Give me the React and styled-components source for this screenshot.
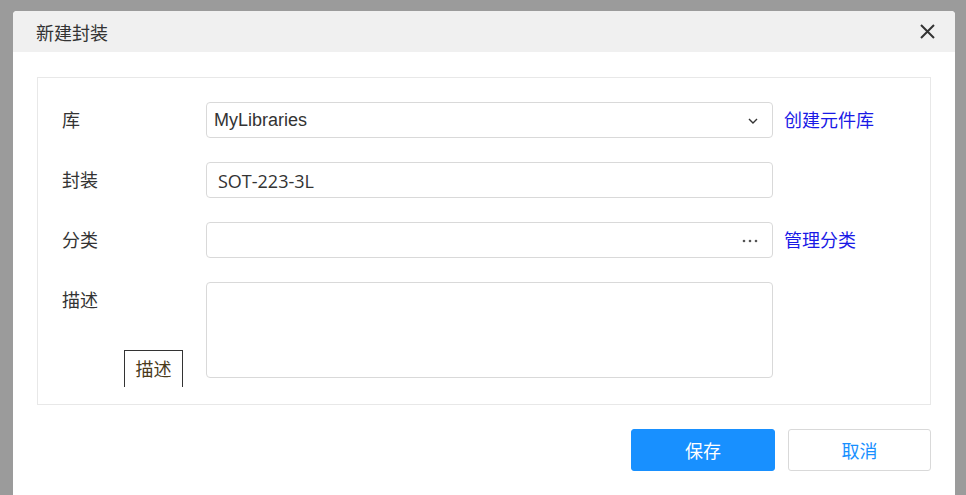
import React from 'react';
import styled, { createGlobalStyle } from 'styled-components';

const Global = createGlobalStyle`
  html, body { margin: 0; padding: 0; }
  body {
    background: #9b9b9b;
    font-family: "Liberation Sans", "Noto Sans CJK SC", sans-serif;
    overflow: hidden;
  }
`;

const Page = styled.div`
  padding: 11px 11px 0 13px;
  height: 495px;
  box-sizing: border-box;
`;

const Dialog = styled.div`
  width: 942px;
  height: 484px;
  background: #fff;
  border-radius: 4px 4px 0 0;
  overflow: hidden;
`;

const Header = styled.div`
  height: 41px;
  background: #f0f0f0;
  display: flex;
  align-items: center;
  justify-content: space-between;
  padding: 0 18px 0 23px;
`;

const Title = styled.div`
  font-size: 18px;
  color: #333;
`;

const Close = styled.button`
  border: 0;
  background: none;
  padding: 0;
  width: 20px;
  height: 20px;
  display: flex;
  align-items: center;
  justify-content: center;
`;

const Body = styled.div`
  padding: 25px 24px 0 24px;
`;

const Panel = styled.div`
  border: 1px solid #e8e8e8;
  padding: 24px 0 26px 24px;
  display: flex;
  flex-direction: column;
  gap: 24px;
`;

const Row = styled.div`
  display: flex;
  align-items: flex-start;
  position: relative;
`;

const Label = styled.div`
  width: 144px;
  height: 36px;
  line-height: 38px;
  font-size: 18px;
  color: #333;
`;

const Field = styled.div`
  width: 567px;
  height: ${p => p.$tall ? '96px' : '36px'};
  box-sizing: border-box;
  border: 1px solid #d9d9d9;
  border-radius: 4px;
  display: flex;
  align-items: center;
  justify-content: space-between;
  padding: 1px 14px 0 ${p => p.$pad || 7}px;
  font-size: 18px;
  color: #333;
`;

const Value = styled.span`
  font-family: ${p => p.$alt ? '"Open Sans", sans-serif' : 'inherit'};
`;

const Link = styled.a`
  margin-left: 11px;
  height: 36px;
  line-height: 38px;
  font-size: 18px;
  color: #1a1ae6;
  text-decoration: none;
`;

const Tip = styled.div`
  position: absolute;
  left: 62px;
  top: 68px;
  width: 59px;
  height: 37px;
  box-sizing: border-box;
  border: 1px solid #333;
  border-bottom: 0;
  background: #fff;
  text-align: center;
  line-height: 38px;
  font-size: 18px;
  color: #4a3a1a;
`;

const Footer = styled.div`
  display: flex;
  justify-content: flex-end;
  gap: 13px;
  padding-top: 24px;
`;

const Button = styled.button`
  width: ${p => p.$w}px;
  height: 42px;
  border-radius: 3px;
  font-size: 18px;
  font-family: inherit;
  border: 1px solid ${p => p.$primary ? '#1890ff' : '#d9d9d9'};
  background: ${p => p.$primary ? '#1890ff' : '#fff'};
  color: ${p => p.$primary ? '#fff' : '#1890ff'};
`;

export default function App() {
  return (
    <Page>
      <Global />
      <Dialog>
        <Header>
          <Title>新建封装</Title>
          <Close>
            <svg width="15" height="15" viewBox="0 0 15 15">
              <path d="M1 1L14 14M14 1L1 14" stroke="#333" strokeWidth="2" />
            </svg>
          </Close>
        </Header>
        <Body>
          <Panel>
            <Row>
              <Label>库</Label>
              <Field>
                <Value>MyLibraries</Value>
                <svg width="10" height="6" viewBox="0 0 10 6">
                  <path d="M1 1L5 5L9 1" stroke="#333" strokeWidth="1.4" fill="none" />
                </svg>
              </Field>
              <Link>创建元件库</Link>
            </Row>
            <Row>
              <Label>封装</Label>
              <Field $pad={11}>
                <Value $alt>SOT-223-3L</Value>
              </Field>
            </Row>
            <Row>
              <Label>分类</Label>
              <Field>
                <span />
                <svg width="16" height="4" viewBox="0 0 16 4">
                  <circle cx="2" cy="2" r="1.3" fill="#555" />
                  <circle cx="8" cy="2" r="1.3" fill="#555" />
                  <circle cx="14" cy="2" r="1.3" fill="#555" />
                </svg>
              </Field>
              <Link>管理分类</Link>
            </Row>
            <Row>
              <Label>描述</Label>
              <Field $tall />
              <Tip>描述</Tip>
            </Row>
          </Panel>
          <Footer>
            <Button $primary $w={144}>保存</Button>
            <Button $w={143}>取消</Button>
          </Footer>
        </Body>
      </Dialog>
    </Page>
  );
}
